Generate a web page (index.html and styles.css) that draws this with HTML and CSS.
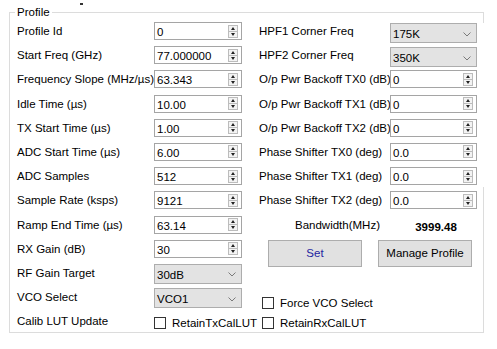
FILE: index.html
```html
<!DOCTYPE html>
<html lang="en">
<head>
    <meta charset="UTF-8">
    <title>Profile</title>
    <link rel="stylesheet" href="styles.css">
</head>
<body>
    <div class="mark"></div>
    <fieldset class="group">
        <legend>Profile</legend>
        <div class="grid">
            <!-- row 1 -->
            <label class="lbl">Profile Id</label>
            <div class="spin"><span>0</span><span class="arrows"><i class="up"></i><i class="down"></i></span></div>
            <label class="lbl lbl-r">HPF1 Corner Freq</label>
            <div class="select select-hpf"><span>175K</span><svg width="8" height="5" viewBox="0 0 8 5"><path d="M0.5 0.5 L4 4 L7.5 0.5" fill="none" stroke="#7a7a7a"/></svg></div>

            <!-- row 2 -->
            <label class="lbl">Start Freq (GHz)</label>
            <div class="spin"><span>77.000000</span><span class="arrows"><i class="up"></i><i class="down"></i></span></div>
            <label class="lbl lbl-r">HPF2 Corner Freq</label>
            <div class="select select-hpf"><span>350K</span><svg width="8" height="5" viewBox="0 0 8 5"><path d="M0.5 0.5 L4 4 L7.5 0.5" fill="none" stroke="#7a7a7a"/></svg></div>

            <!-- row 3 -->
            <label class="lbl">Frequency Slope (MHz/µs)</label>
            <div class="spin"><span>63.343</span><span class="arrows"><i class="up"></i><i class="down"></i></span></div>
            <label class="lbl lbl-r">O/p Pwr Backoff TX0 (dB)</label>
            <div class="spin"><span>0</span><span class="arrows"><i class="up"></i><i class="down"></i></span></div>

            <!-- row 4 -->
            <label class="lbl">Idle Time (µs)</label>
            <div class="spin"><span>10.00</span><span class="arrows"><i class="up"></i><i class="down"></i></span></div>
            <label class="lbl lbl-r">O/p Pwr Backoff TX1 (dB)</label>
            <div class="spin"><span>0</span><span class="arrows"><i class="up"></i><i class="down"></i></span></div>

            <!-- row 5 -->
            <label class="lbl">TX Start Time (µs)</label>
            <div class="spin"><span>1.00</span><span class="arrows"><i class="up"></i><i class="down"></i></span></div>
            <label class="lbl lbl-r">O/p Pwr Backoff TX2 (dB)</label>
            <div class="spin"><span>0</span><span class="arrows"><i class="up"></i><i class="down"></i></span></div>

            <!-- row 6 -->
            <label class="lbl">ADC Start Time (µs)</label>
            <div class="spin"><span>6.00</span><span class="arrows"><i class="up"></i><i class="down"></i></span></div>
            <label class="lbl lbl-r">Phase Shifter TX0 (deg)</label>
            <div class="spin"><span>0.0</span><span class="arrows"><i class="up"></i><i class="down"></i></span></div>

            <!-- row 7 -->
            <label class="lbl">ADC Samples</label>
            <div class="spin"><span>512</span><span class="arrows"><i class="up"></i><i class="down"></i></span></div>
            <label class="lbl lbl-r">Phase Shifter TX1 (deg)</label>
            <div class="spin"><span>0.0</span><span class="arrows"><i class="up"></i><i class="down"></i></span></div>

            <!-- row 8 -->
            <label class="lbl">Sample Rate (ksps)</label>
            <div class="spin"><span>9121</span><span class="arrows"><i class="up"></i><i class="down"></i></span></div>
            <label class="lbl lbl-r">Phase Shifter TX2 (deg)</label>
            <div class="spin"><span>0.0</span><span class="arrows"><i class="up"></i><i class="down"></i></span></div>

            <!-- row 9 -->
            <label class="lbl">Ramp End Time (µs)</label>
            <div class="spin"><span>63.14</span><span class="arrows"><i class="up"></i><i class="down"></i></span></div>
            <div class="bw-label">Bandwidth(MHz)</div>
            <div class="bw-value">3999.48</div>

            <!-- row 10 -->
            <label class="lbl">RX Gain (dB)</label>
            <div class="spin"><span>30</span><span class="arrows"><i class="up"></i><i class="down"></i></span></div>
            <div class="buttons">
                <button class="btn btn-set">Set</button>
                <button class="btn">Manage Profile</button>
            </div>

            <!-- row 11 -->
            <label class="lbl">RF Gain Target</label>
            <div class="select"><span>30dB</span><svg width="8" height="5" viewBox="0 0 8 5"><path d="M0.5 0.5 L4 4 L7.5 0.5" fill="none" stroke="#7a7a7a"/></svg></div>
            <div class="wide"></div>

            <!-- row 12 -->
            <label class="lbl">VCO Select</label>
            <div class="select"><span>VCO1</span><svg width="8" height="5" viewBox="0 0 8 5"><path d="M0.5 0.5 L4 4 L7.5 0.5" fill="none" stroke="#7a7a7a"/></svg></div>
            <div class="wide check check-force"><span class="box"></span>Force VCO Select</div>

            <!-- row 13 -->
            <label class="lbl">Calib LUT Update</label>
            <div class="check"><span class="box"></span>RetainTxCalLUT</div>
            <div class="wide check check-rx"><span class="box"></span>RetainRxCalLUT</div>
        </div>
    </fieldset>
</body>
</html>
```

FILE: styles.css
```css
body {
    margin: 0;
    background-color: #fff;
    font-family: "Liberation Sans", Arial, sans-serif;
    font-size: 11.5px;
    color: #000;
    position: relative;
    width: 497px;
    height: 349px;
    overflow: hidden;
}
.mark {
    position: absolute;
    left: 80px;
    top: 3px;
    width: 3px;
    height: 2px;
    background-color: #333;
}
.group {
    position: relative;
    box-sizing: border-box;
    width: 475px;
    margin: 5px 0 0 9px;
    padding: 2px 6px 1px 7px;
    border: 1px solid #dcdcdc;
}
.group::after {
    content: '';
    position: absolute;
    right: -1px;
    top: 4px;
    width: 1px;
    height: 164px;
    background-color: #fff;
}
legend {
    padding: 0 2px;
    margin-left: -2px;
    line-height: 14px;
}
.grid {
    display: grid;
    grid-template-columns: 137px 88px 148px 87px;
    grid-template-rows: repeat(12, 24.2px) 20px;
    align-items: start;
}
.lbl {
    line-height: 20px;
    white-space: nowrap;
}
.lbl-r {
    padding-left: 17px;
}
.spin {
    box-sizing: border-box;
    height: 18px;
    margin-top: 1px;
    border: 1px solid #a5a5a5;
    background-color: #fff;
    display: flex;
    align-items: center;
    padding-left: 2px;
}
.spin span:first-child {
    padding-top: 2px;
}
.arrows {
    box-sizing: border-box;
    margin-left: auto;
    margin-right: 3px;
    width: 10px;
    height: 13px;
    border: 1px solid #bcbcbc;
    background-color: #f3f3f3;
    display: flex;
    flex-direction: column;
}
.arrows i {
    flex: 1;
    display: flex;
    align-items: center;
    justify-content: center;
}
.arrows .up {
    border-bottom: 1px solid #bcbcbc;
}
.arrows i::before {
    content: '';
    border-left: 2.5px solid transparent;
    border-right: 2.5px solid transparent;
}
.arrows .up::before {
    border-bottom: 3px solid #222;
}
.arrows .down::before {
    border-top: 3px solid #222;
}
.select {
    box-sizing: border-box;
    height: 20px;
    margin-top: 1px;
    border: 1px solid #adadad;
    background-color: #e3e3e3;
    display: flex;
    align-items: center;
    padding: 2px 5px 0 2px;
    justify-content: space-between;
}
.select-hpf {
    margin-top: 2px;
}
.bw-label {
    line-height: 20px;
    text-align: right;
    padding-right: 10px;
}
.bw-value {
    line-height: 20px;
    margin-top: 2px;
    font-weight: bold;
    text-align: center;
    padding-left: 5px;
}
.buttons {
    grid-column: span 2;
    display: flex;
    gap: 16px;
    padding-left: 26px;
    margin-top: 1px;
}
.btn {
    width: 94px;
    height: 27px;
    border: 1px solid #adadad;
    background-color: #e1e1e1;
    font-family: inherit;
    font-size: 11.5px;
    color: #000;
    padding: 0;
}
.btn-set {
    color: #1f1fa0;
}
.wide {
    grid-column: span 2;
}
.check {
    display: flex;
    align-items: center;
    gap: 6px;
    line-height: 20px;
    margin-top: 2px;
    white-space: nowrap;
}
.check-force,
.check-rx {
    padding-left: 20px;
}
.check-force {
    margin-top: 6px;
}
.box {
    flex-shrink: 0;
    box-sizing: border-box;
    width: 12px;
    height: 12px;
    border: 1px solid #333;
    background-color: #fff;
}
```
